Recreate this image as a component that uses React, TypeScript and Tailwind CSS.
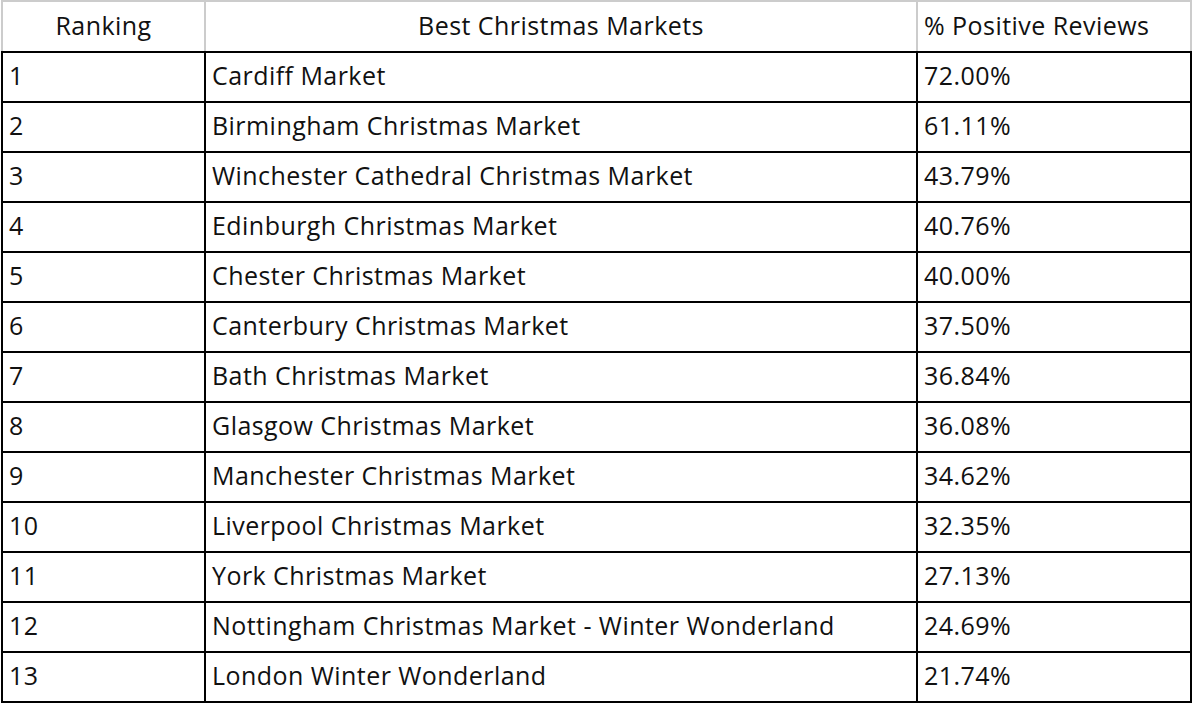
import React from "react";

const rows: [string, string, string][] = [
  ["1", "Cardiff Market", "72.00%"],
  ["2", "Birmingham Christmas Market", "61.11%"],
  ["3", "Winchester Cathedral Christmas Market", "43.79%"],
  ["4", "Edinburgh Christmas Market", "40.76%"],
  ["5", "Chester Christmas Market", "40.00%"],
  ["6", "Canterbury Christmas Market", "37.50%"],
  ["7", "Bath Christmas Market", "36.84%"],
  ["8", "Glasgow Christmas Market", "36.08%"],
  ["9", "Manchester Christmas Market", "34.62%"],
  ["10", "Liverpool Christmas Market", "32.35%"],
  ["11", "York Christmas Market", "27.13%"],
  ["12", "Nottingham Christmas Market - Winter Wonderland", "24.69%"],
  ["13", "London Winter Wonderland", "21.74%"],
];

export default function App() {
  return (
    <div className="w-[1192px] h-[704px] bg-white pl-[1px] text-[#111] text-[25px] leading-none tracking-[0.45px] font-['Open_Sans',sans-serif]">
      <table className="w-[1189px] border-collapse table-fixed">
        <colgroup>
          <col className="w-[203px]" />
          <col className="w-[712px]" />
          <col className="w-[274px]" />
        </colgroup>
        <thead>
          <tr className="h-[51px]">
            <th className="border-2 border-[#cccccc] border-b-black font-normal text-center pb-[2px]">Ranking</th>
            <th className="border-2 border-[#cccccc] border-b-black font-normal text-center pb-[2px]">Best Christmas Markets</th>
            <th className="border-2 border-[#cccccc] border-b-black font-normal text-left pl-[6px] pb-[2px]">% Positive Reviews</th>
          </tr>
        </thead>
        <tbody>
          {rows.map(([rank, name, pct]) => (
            <tr key={rank} className="h-[50px]">
              <td className="border-2 border-black pl-[6px] pb-[4px]">{rank}</td>
              <td className="border-2 border-black pl-[6px] pb-[4px]">{name}</td>
              <td className="border-2 border-black pl-[6px] pb-[4px]">{pct}</td>
            </tr>
          ))}
        </tbody>
      </table>
    </div>
  );
}
